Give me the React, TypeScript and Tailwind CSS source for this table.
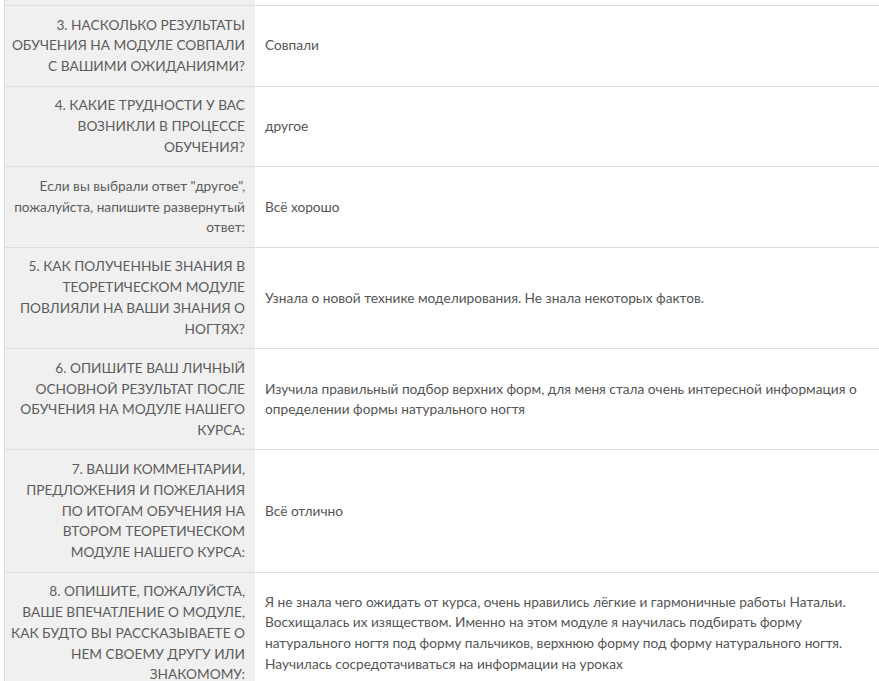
const rows: { q: string[]; a: string[] }[] = [
  {
    q: ['3. НАСКОЛЬКО РЕЗУЛЬТАТЫ', 'ОБУЧЕНИЯ НА МОДУЛЕ СОВПАЛИ', 'С ВАШИМИ ОЖИДАНИЯМИ?'],
    a: ['Совпали'],
  },
  {
    q: ['4. КАКИЕ ТРУДНОСТИ У ВАС', 'ВОЗНИКЛИ В ПРОЦЕССЕ', 'ОБУЧЕНИЯ?'],
    a: ['другое'],
  },
  {
    q: ['Если вы выбрали ответ "другое",', 'пожалуйста, напишите развернутый', 'ответ:'],
    a: ['Всё хорошо'],
  },
  {
    q: ['5. КАК ПОЛУЧЕННЫЕ ЗНАНИЯ В', 'ТЕОРЕТИЧЕСКОМ МОДУЛЕ', 'ПОВЛИЯЛИ НА ВАШИ ЗНАНИЯ О', 'НОГТЯХ?'],
    a: ['Узнала о новой технике моделирования. Не знала некоторых фактов.'],
  },
  {
    q: ['6. ОПИШИТЕ ВАШ ЛИЧНЫЙ', 'ОСНОВНОЙ РЕЗУЛЬТАТ ПОСЛЕ', 'ОБУЧЕНИЯ НА МОДУЛЕ НАШЕГО', 'КУРСА:'],
    a: [
      'Изучила правильный подбор верхних форм, для меня стала очень интересной информация о',
      'определении формы натурального ногтя',
    ],
  },
  {
    q: [
      '7. ВАШИ КОММЕНТАРИИ,',
      'ПРЕДЛОЖЕНИЯ И ПОЖЕЛАНИЯ',
      'ПО ИТОГАМ ОБУЧЕНИЯ НА',
      'ВТОРОМ ТЕОРЕТИЧЕСКОМ',
      'МОДУЛЕ НАШЕГО КУРСА:',
    ],
    a: ['Всё отлично'],
  },
  {
    q: [
      '8. ОПИШИТЕ, ПОЖАЛУЙСТА,',
      'ВАШЕ ВПЕЧАТЛЕНИЕ О МОДУЛЕ,',
      'КАК БУДТО ВЫ РАССКАЗЫВАЕТЕ О',
      'НЕМ СВОЕМУ ДРУГУ ИЛИ',
      'ЗНАКОМОМУ:',
    ],
    a: [
      'Я не знала чего ожидать от курса, очень нравились лёгкие и гармоничные работы Натальи.',
      'Восхищалась их изяществом. Именно на этом модуле я научилась подбирать форму',
      'натурального ногтя под форму пальчиков, верхнюю форму под форму натурального ногтя.',
      'Научилась сосредотачиваться на информации на уроках',
    ],
  },
];

function Lines({ lines }: { lines: string[] }) {
  return (
    <>
      {lines.map((l, i) => (
        <div key={i} className="whitespace-nowrap">
          {l}
        </div>
      ))}
    </>
  );
}

export default function App() {
  return (
    <div
      className="w-[879px] h-[681px] overflow-hidden bg-white text-[13.7px] leading-[20.8px] text-[#5c5c5c]"
      style={{ fontFamily: 'Lato, "Noto Sans", sans-serif' }}
    >
      <div className="ml-[4px] border-l border-[#dcdcdc]">
        <div className="flex h-[5px]">
          <div className="w-[250px] shrink-0 bg-[#f0f0f0]" />
          <div className="flex-1" />
        </div>
        {rows.map((r, i) => (
          <div key={i} className="flex border-t border-[#dedede]">
            <div className="w-[250px] shrink-0 bg-[#f0f0f0] py-[8.6px] pr-[10px] text-right">
              <Lines lines={r.q} />
            </div>
            <div className="flex-1 flex flex-col justify-center pl-[10px] py-[8.6px] text-[#555555]">
              <Lines lines={r.a} />
            </div>
          </div>
        ))}
      </div>
    </div>
  );
}
